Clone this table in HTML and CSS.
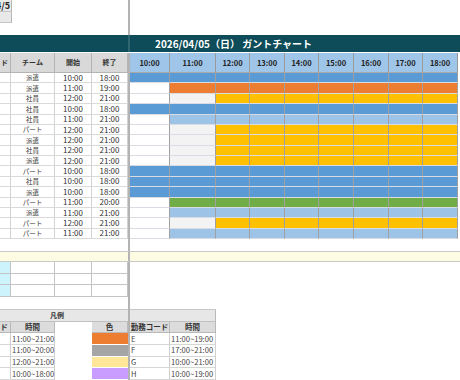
FILE: index.html
```html
<!DOCTYPE html>
<html lang="ja">
<head>
<meta charset="utf-8">
<title>ガントチャート</title>
<link rel="stylesheet" href="styles.css">
</head>
<body>
<div class="sheet">
  <div class="band top">
    <div class="lp">
      <div class="mini">
        <div class="mc date"><span>4/5</span></div>
        <div class="mc"></div>
      </div>
    </div>
    <div class="rp"></div>
  </div>

  <div class="band title">
    <div class="lp"></div>
    <div class="rp"><span class="ttl">2026/04/05（日） ガントチャート</span></div>
  </div>

  <div class="band head">
    <div class="lp lgrid">
      <div class="hc clip"><span>ド</span></div>
      <div class="hc">チーム</div>
      <div class="hc">開始</div>
      <div class="hc">終了</div>
    </div>
    <div class="rp">
      <div class="tgrid thead">
        <div class="th">10:00</div><div class="th">11:00</div><div class="th">12:00</div>
        <div class="th">13:00</div><div class="th">14:00</div><div class="th">15:00</div>
        <div class="th">16:00</div><div class="th">17:00</div><div class="th">18:00</div>
      </div>
    </div>
  </div>

  <div class="band body">
    <div class="lp lgrid data">
      <div class="c"></div><div class="c t">派遣</div><div class="c n">10:00</div><div class="c n">18:00</div>
      <div class="c"></div><div class="c t">派遣</div><div class="c n">11:00</div><div class="c n">19:00</div>
      <div class="c"></div><div class="c t">社員</div><div class="c n">12:00</div><div class="c n">21:00</div>
      <div class="c"></div><div class="c t">社員</div><div class="c n">10:00</div><div class="c n">18:00</div>
      <div class="c"></div><div class="c t">社員</div><div class="c n">11:00</div><div class="c n">21:00</div>
      <div class="c"></div><div class="c t">パート</div><div class="c n">12:00</div><div class="c n">21:00</div>
      <div class="c"></div><div class="c t">派遣</div><div class="c n">12:00</div><div class="c n">21:00</div>
      <div class="c"></div><div class="c t">社員</div><div class="c n">12:00</div><div class="c n">21:00</div>
      <div class="c"></div><div class="c t">派遣</div><div class="c n">12:00</div><div class="c n">21:00</div>
      <div class="c"></div><div class="c t">パート</div><div class="c n">10:00</div><div class="c n">18:00</div>
      <div class="c"></div><div class="c t">社員</div><div class="c n">10:00</div><div class="c n">18:00</div>
      <div class="c"></div><div class="c t">派遣</div><div class="c n">10:00</div><div class="c n">18:00</div>
      <div class="c"></div><div class="c t">パート</div><div class="c n">11:00</div><div class="c n">20:00</div>
      <div class="c"></div><div class="c t">派遣</div><div class="c n">11:00</div><div class="c n">21:00</div>
      <div class="c"></div><div class="c t">パート</div><div class="c n">12:00</div><div class="c n">21:00</div>
      <div class="c"></div><div class="c t">パート</div><div class="c n">11:00</div><div class="c n">21:00</div>
    </div>
    <div class="rp">
      <div class="tgrid chart">
        <div class="b"></div><div class="b"></div><div class="b"></div><div class="b"></div><div class="b"></div><div class="b"></div><div class="b"></div><div class="b"></div><div class="b"></div>
        <div class="w"></div><div class="o"></div><div class="o"></div><div class="o"></div><div class="o"></div><div class="o"></div><div class="o"></div><div class="o"></div><div class="o"></div>
        <div class="w"></div><div class="g0"></div><div class="y"></div><div class="y"></div><div class="y"></div><div class="y"></div><div class="y"></div><div class="y"></div><div class="y"></div>
        <div class="b"></div><div class="b"></div><div class="b"></div><div class="b"></div><div class="b"></div><div class="b"></div><div class="b"></div><div class="b"></div><div class="b"></div>
        <div class="w"></div><div class="lb"></div><div class="lb"></div><div class="lb"></div><div class="lb"></div><div class="lb"></div><div class="lb"></div><div class="lb"></div><div class="lb"></div>
        <div class="w"></div><div class="g0"></div><div class="y"></div><div class="y"></div><div class="y"></div><div class="y"></div><div class="y"></div><div class="y"></div><div class="y"></div>
        <div class="w"></div><div class="g0"></div><div class="y"></div><div class="y"></div><div class="y"></div><div class="y"></div><div class="y"></div><div class="y"></div><div class="y"></div>
        <div class="w"></div><div class="g0"></div><div class="y"></div><div class="y"></div><div class="y"></div><div class="y"></div><div class="y"></div><div class="y"></div><div class="y"></div>
        <div class="w"></div><div class="g0"></div><div class="y"></div><div class="y"></div><div class="y"></div><div class="y"></div><div class="y"></div><div class="y"></div><div class="y"></div>
        <div class="b"></div><div class="b"></div><div class="b"></div><div class="b"></div><div class="b"></div><div class="b"></div><div class="b"></div><div class="b"></div><div class="b"></div>
        <div class="b"></div><div class="b"></div><div class="b"></div><div class="b"></div><div class="b"></div><div class="b"></div><div class="b"></div><div class="b"></div><div class="b"></div>
        <div class="b"></div><div class="b"></div><div class="b"></div><div class="b"></div><div class="b"></div><div class="b"></div><div class="b"></div><div class="b"></div><div class="b"></div>
        <div class="w"></div><div class="gr"></div><div class="gr"></div><div class="gr"></div><div class="gr"></div><div class="gr"></div><div class="gr"></div><div class="gr"></div><div class="gr"></div>
        <div class="w"></div><div class="lb"></div><div class="lb"></div><div class="lb"></div><div class="lb"></div><div class="lb"></div><div class="lb"></div><div class="lb"></div><div class="lb"></div>
        <div class="w"></div><div class="g0"></div><div class="y"></div><div class="y"></div><div class="y"></div><div class="y"></div><div class="y"></div><div class="y"></div><div class="y"></div>
        <div class="w"></div><div class="lb"></div><div class="lb"></div><div class="lb"></div><div class="lb"></div><div class="lb"></div><div class="lb"></div><div class="lb"></div><div class="lb"></div>
      </div>
    </div>
  </div>

  <div class="band gap">
    <div class="lp"></div>
    <div class="rp"></div>
  </div>

  <div class="band yellow">
    <div class="lp"></div>
    <div class="rp"></div>
  </div>

  <div class="band inputs">
    <div class="lp lgrid ins">
      <div class="ic cy"></div><div class="ic"></div><div class="ic"></div><div class="ic"></div>
      <div class="ic cy"></div><div class="ic"></div><div class="ic"></div><div class="ic"></div>
      <div class="ic cy"></div><div class="ic"></div><div class="ic"></div><div class="ic"></div>
    </div>
    <div class="rp"></div>
  </div>

  <div class="band gap">
    <div class="lp"></div>
    <div class="rp"></div>
  </div>

  <div class="band legend">
    <div class="lp">
      <div class="lg-title">凡例</div>
      <div class="lgrid lg-rows">
        <div class="lh clip"><span>ド</span></div><div class="lh">時間</div><div class="blank"></div><div class="lh">色</div>
        <div class="lc"></div><div class="lc tx">11:00~21:00</div><div class="blank"></div><div class="sw orange"></div>
        <div class="lc"></div><div class="lc tx">11:00~20:00</div><div class="blank"></div><div class="sw gray"></div>
        <div class="lc"></div><div class="lc tx">12:00~21:00</div><div class="blank"></div><div class="sw cream"></div>
        <div class="lc"></div><div class="lc tx">10:00~18:00</div><div class="blank"></div><div class="sw violet"></div>
      </div>
    </div>
    <div class="rp">
      <div class="rlg">
        <div class="lg-title"></div>
        <div class="rgrid">
          <div class="lh">勤務コード</div><div class="lh">時間</div>
          <div class="lc tx">E</div><div class="lc tx">11:00~19:00</div>
          <div class="lc tx">F</div><div class="lc tx">17:00~21:00</div>
          <div class="lc tx">G</div><div class="lc tx">10:00~21:00</div>
          <div class="lc tx">H</div><div class="lc tx">10:00~19:00</div>
        </div>
      </div>
    </div>
  </div>
</div>
</body>
</html>
```

FILE: styles.css
```css
* {
  box-sizing: border-box;
  margin: 0;
  padding: 0;
}

html, body {
  width: 460px;
  height: 380px;
  overflow: hidden;
  background: #ffffff;
}

body {
  font-family: "Noto Sans CJK JP", "Noto Sans", sans-serif;
  color: #333333;
  line-height: 1;
}

.sheet {
  width: 460px;
}

.band {
  display: flex;
}

.lp {
  width: 130px;
  flex: none;
  border-right: 2px solid #b3b3b3;
}

.rp {
  flex: 1;
  min-width: 0;
}

/* top area */
.top {
  height: 35px;
}

.mini {
  width: 12px;
  border-right: 1px solid #b8b8b8;
}

.mc {
  height: 11.7px;
  background: #e9e9e9;
  border-bottom: 1px solid #c6c6c6;
  overflow: hidden;
  display: flex;
  justify-content: flex-end;
  align-items: center;
  padding-right: 1px;
}

.mc + .mc {
  height: 11.3px;
}

.date span {
  font-size: 9px;
  font-weight: 700;
  color: #222;
  white-space: nowrap;
}

/* title */
.title {
  height: 18px;
  background: #0d4c58;
  border-bottom: 1px solid #ffffff;
}

.title .lp {
  border-right-color: #2f6670;
}

.ttl {
  display: block;
  padding-left: 25px;
  color: #ffffff;
  font-size: 10px;
  font-weight: 700;
  line-height: 17px;
  white-space: nowrap;
}

/* grids */
.lgrid {
  display: grid;
  grid-template-columns: 11px 44px 37px 36px;
}

.tgrid {
  display: grid;
  grid-template-columns: 40px 46px 34px 35px 34px 35px 35px 34px 35px;
  width: 328px;
}

/* header */
.head {
  height: 20px;
}

.hc {
  background: #d9d9d9;
  border-right: 1px solid #b4b4b4;
  border-bottom: 1px solid #b4b4b4;
  display: flex;
  align-items: center;
  justify-content: center;
  font-size: 7px;
  font-weight: 700;
  color: #333;
}

.clip {
  justify-content: flex-end;
  padding-right: 2px;
  overflow: hidden;
}

.thead {
  height: 20px;
}

.th {
  background: #9fc5e8;
  border-right: 1px solid #9a9a9a;
  border-bottom: 1px solid #a9a9a9;
  display: flex;
  align-items: center;
  justify-content: center;
  font-size: 7.5px;
  font-weight: 700;
  color: #222;
}

/* body */
.body {
  height: 166px;
}

.data {
  grid-template-rows: repeat(16, 1fr);
  height: 166px;
}

.c {
  border-right: 1px solid #d2d2d2;
  border-bottom: 1px solid #dadada;
  display: flex;
  align-items: center;
  justify-content: center;
  color: #333;
}

.t {
  font-size: 6.5px;
}

.n {
  font-size: 8px;
}

.chart {
  grid-template-rows: repeat(16, 1fr);
  height: 166px;
}

.chart > div {
  border-right: 1px solid #a0a0a0;
  border-bottom: 1px solid #d9dde3;
}

.b { background: #5b9bd5; }
.lb { background: #9dc3e6; }
.o { background: #ed7d31; }
.y { background: #ffc000; }
.gr { background: #70ad47; }
.w { background: #ffffff; }
.g0 { background: #f3f3f3; }

/* gap and yellow */
.gap {
  height: 12px;
}

.yellow {
  height: 11px;
  background: #fdfbe1;
  border-top: 1px solid #c8c8c8;
  border-bottom: 1px solid #c8c8c8;
}

/* input rows */
.inputs {
  height: 35px;
}

.ins {
  grid-template-rows: repeat(3, 1fr);
}

.ic {
  border-right: 1px solid #c4c4c4;
  border-bottom: 1px solid #c4c4c4;
}

.cy {
  background: #cdf4fd;
}

/* legend */
.legend {
  height: 71px;
}

.lg-title {
  height: 12.5px;
  background: #e7e7e7;
  border-top: 1px solid #c8c8c8;
  border-bottom: 1px solid #c0c0c0;
  display: flex;
  align-items: center;
  justify-content: center;
  padding-right: 14px;
  font-size: 7px;
  font-weight: 700;
  color: #333;
}

.lg-rows {
  grid-template-rows: repeat(5, 11.7px);
}

.lh {
  background: #dcdcdc;
  border-right: 1px solid #b9b9b9;
  border-bottom: 1px solid #b9b9b9;
  display: flex;
  align-items: center;
  justify-content: center;
  font-size: 7.5px;
  font-weight: 700;
  color: #333;
}

.lc {
  border-right: 1px solid #cfcfcf;
  border-bottom: 1px solid #d6d6d6;
  display: flex;
  align-items: center;
  font-size: 7.6px;
  color: #444;
}

.tx {
  padding-left: 1px;
  white-space: nowrap;
}

.blank {
  background: #ffffff;
}

.sw {
  border-bottom: 1px solid #ffffff;
}

.orange { background: #ed7d31; }
.gray { background: #a5a5a5; }
.cream { background: #ffe699; }
.violet { background: #c99cff; }

.rlg {
  width: 86px;
}

.rlg .lg-title {
  border-right: 1px solid #b9b9b9;
}

.rgrid {
  display: grid;
  grid-template-columns: 40px 46px;
  grid-template-rows: repeat(5, 11.7px);
}
```
